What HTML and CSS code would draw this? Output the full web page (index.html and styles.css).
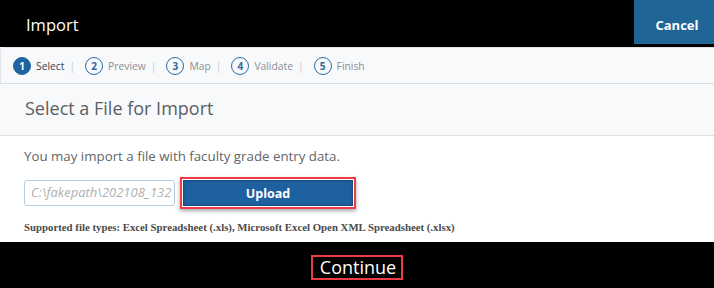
FILE: index.html
```html
<!DOCTYPE html>
<html>
<head>
<meta charset="utf-8">
<link rel="stylesheet" href="styles.css">
</head>
<body>
<div class="page">
  <header class="top">
    <div class="title">Import</div>
    <button class="cancel">Cancel</button>
  </header>
  <nav class="steps">
    <div class="step active"><span class="num">1</span><span class="lbl">Select</span></div>
    <span class="sep">|</span>
    <div class="step"><span class="num">2</span><span class="lbl">Preview</span></div>
    <span class="sep">|</span>
    <div class="step"><span class="num">3</span><span class="lbl">Map</span></div>
    <span class="sep">|</span>
    <div class="step"><span class="num">4</span><span class="lbl">Validate</span></div>
    <span class="sep">|</span>
    <div class="step"><span class="num">5</span><span class="lbl">Finish</span></div>
  </nav>
  <section class="sect-head">Select a File for Import</section>
  <main class="body">
    <p class="intro">You may import a file with faculty grade entry data.</p>
    <div class="upload-row">
      <div class="file"><span class="path">C:\fakepath\202108_132</span></div>
      <div class="hl"><button class="upload">Upload</button></div>
    </div>
    <p class="types">Supported file types: Excel Spreadsheet (.xls), Microsoft Excel Open XML Spreadsheet (.xlsx)</p>
  </main>
  <footer class="foot">
    <span class="continue">Continue</span>
  </footer>
</div>
</body>
</html>
```
FILE: styles.css
```css
* { box-sizing: border-box; }
html, body { margin: 0; padding: 0; background: #fff; }
body { font-family: "Open Sans", "Noto Sans", sans-serif; width: 714px; height: 288px; overflow: hidden; }
.page { display: flex; flex-direction: column; height: 288px; }
.top {
  height: 47px; background: #000; display: flex; align-items: flex-start; justify-content: space-between;
}
.title { color: #fff; font-size: 16.5px; padding-left: 26px; line-height: 49px; }
.cancel {
  width: 80px; height: 44px; background: #1f6696; color: #fff; border: 0; margin: 0;
  font-family: "Open Sans", sans-serif; font-weight: 700; font-size: 13px; padding: 5px 0 0 6px;
}
.steps {
  height: 37px; background: #f8f9fb; border-top: 1px solid #e3e5e8; border-bottom: 1px solid #dcdfe2;
  border-left: 1px solid #e3e5e8; border-top-left-radius: 4px;
  display: flex; align-items: center; padding-left: 12px; font-size: 10.3px;
}
.step { display: flex; align-items: center; gap: 5px; color: #8a9098; }
.num {
  width: 18px; height: 18px; border-radius: 50%; border: 1.5px solid #2a6aa4; color: #2a6aa4;
  display: flex; align-items: center; justify-content: center; font-size: 10px; font-weight: 700;
}
.step.active { color: #3b434c; }
.step.active .num { background: #1f64a0; border-color: #1f64a0; color: #fff; }
.sep { color: #c8ccd0; margin: 0 10px 0 5px; }
.sect-head {
  height: 52px; background: #f8f9fa; border-bottom: 1px solid #dedfe1;
  font-size: 18px; color: #5b5f63; padding: 12px 0 0 25px;
}
.body { padding: 0 0 0 24px; flex: 1; }
.intro { margin: 10px 0 0; font-size: 13.3px; color: #62666a; line-height: 20px; }
.upload-row { display: flex; align-items: center; margin-top: 11px; gap: 5px; }
.file {
  width: 151px; height: 26px; border: 1.5px solid #b5cde2; border-radius: 3px;
  font-style: italic; color: #aeb1b4; font-size: 13px; padding: 0 0 0 6px; line-height: 23px;
  white-space: nowrap; overflow: hidden;
}
.hl { border: 2px solid #ec3d46; padding: 1px; box-shadow: 0 2px 4px rgba(0,0,0,0.35); }
.upload {
  display: block; width: 170px; height: 26px; background: #1e61a0; color: #fff; border: 0; margin: 0;
  font-family: "Open Sans", sans-serif; font-weight: 700; font-size: 12.5px;
  box-shadow: inset 0 0 3px rgba(0,0,0,0.5);
}
.types {
  margin: 12px 0 0; font-family: "Liberation Serif", serif; font-weight: 700; font-size: 10.8px; color: #4a4a4a;
}
.foot { height: 46px; background: #000; display: flex; justify-content: center; padding-top: 13px; }
.continue {
  height: 25px; border: 2px solid #ec3d46; color: #fff; font-size: 18px; line-height: 20px;
  padding: 0 5px 0 7px; margin-left: 0;
}
```
